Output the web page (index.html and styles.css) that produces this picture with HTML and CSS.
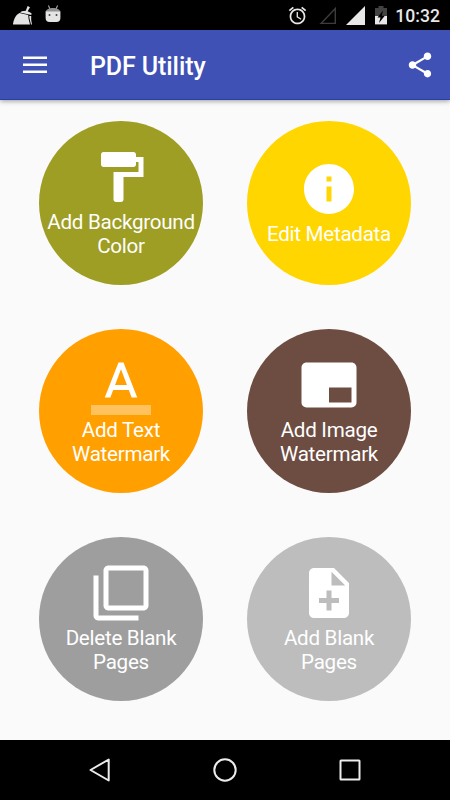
FILE: index.html
```html
<!DOCTYPE html>
<html lang="en">
<head>
    <meta charset="UTF-8">
    <meta name="viewport" content="width=device-width, initial-scale=1.0">
    <title>PDF Utility</title>
    <link rel="stylesheet" href="styles.css">
</head>
<body>
    <div class="status-bar">
        <div class="notifications">
            <svg width="20" height="20" viewBox="0 0 20 20" fill="#e4e4e4">
                <path d="M14.600 1L17 2.300L14.700 6.200L18.500 8.200L18.300 10L7 7.600L8.800 6.200L12.800 5.800z"/>
                <path d="M6.500 8L15.200 10L15.600 14L17 19.500H0C.4 15.500 2.200 10 6.500 8z"/>
                <path d="M16.200 11h2v4l.8 4.500h-1L16.600 14z"/>
            </svg>
            <svg width="16" height="18" viewBox="0 0 16 18">
                <path d="M3.400 .6L5 4M12.600 .6L11 4" stroke="#aaa" stroke-width="1.100"/>
                <path d="M.6 7C1.500 1.800 14.500 1.800 15.400 7z" fill="#929292"/>
                <path d="M.6 6.400h14.800V13q0 4-4 4H4.600q-4 0-4-4z" fill="#e4e4e4"/>
                <circle cx="4.500" cy="10" r="1" fill="#444"/>
                <circle cx="11.500" cy="10" r="1" fill="#444"/>
            </svg>
        </div>
        <div class="system">
            <svg class="alarm" width="21" height="21" viewBox="0 0 24 24" fill="#e8e8e8">
                <path d="M22 5.720l-4.600-3.860-1.290 1.530 4.600 3.860L22 5.720zM7.880 3.390L6.600 1.860 2 5.710l1.290 1.530 4.590-3.850zM12.500 8H11v6l4.750 2.850.750-1.230-4-2.370V8zM12 4c-4.970 0-9 4.030-9 9s4.020 9 9 9c4.970 0 9-4.030 9-9s-4.030-9-9-9zm0 16c-3.870 0-7-3.130-7-7s3.130-7 7-7 7 3.130 7 7-3.130 7-7 7z"/>
            </svg>
            <svg class="signal-off" width="18" height="19" viewBox="0 0 18 19">
                <path d="M2 17.400L16.300 2.500V17.400z" fill="none" stroke="#3c3c3c" stroke-width="1.400"/>
            </svg>
            <svg class="signal" width="19" height="19" viewBox="0 0 19 19">
                <path d="M0 19L19 0V19z" fill="#e8e8e8"/>
            </svg>
            <svg class="battery" width="12" height="19" viewBox="0 0 12 19">
                <path d="M3.500 0h5v2H12v8H0V2h3.500z" fill="#424242"/>
                <path d="M0 10h12v8.400H0z" fill="#e8e8e8"/>
                <path d="M8 4.500L2.500 11.500H5.500L4 17L9.800 9.800H6.800z" fill="#000"/>
            </svg>
            <span class="clock">10:32</span>
        </div>
    </div>

    <div class="toolbar">
        <svg class="menu-icon" width="24" height="18" viewBox="0 0 24 18" fill="#fff">
            <path d="M0 .500h24v2.500H0zM0 7.500h24v2.500H0zM0 14.500h24v2.500H0z"/>
        </svg>
        <h1>PDF Utility</h1>
        <svg class="share-icon" width="30" height="30" viewBox="0 0 24 24" fill="#fff">
            <path d="M18 16.080c-.760 0-1.440.300-1.960.770L8.910 12.700c.050-.230.090-.460.090-.700s-.040-.470-.090-.700l7.050-4.110c.540.500 1.250.810 2.040.810 1.660 0 3-1.340 3-3s-1.340-3-3-3-3 1.340-3 3c0 .240.040.470.090.700L8.040 9.810C7.500 9.310 6.790 9 6 9c-1.660 0-3 1.340-3 3s1.340 3 3 3c.790 0 1.500-.310 2.040-.810l7.120 4.160c-.050.210-.080.430-.080.650 0 1.610 1.310 2.920 2.920 2.920 1.610 0 2.920-1.310 2.920-2.920s-1.310-2.920-2.920-2.920z"/>
        </svg>
    </div>

    <div class="grid">
        <div class="tile olive">
            <svg class="icon" viewBox="0 0 24 24">
                <path d="M18 4V3c0-.550-.450-1-1-1H5c-.550 0-1 .450-1 1v4c0 .550.450 1 1 1h12c.550 0 1-.450 1-1V6h1v4H9v11c0 .550.450 1 1 1h2c.550 0 1-.450 1-1v-9h8V4h-3z"/>
            </svg>
            <span>Add Background<br>Color</span>
        </div>
        <div class="tile yellow">
            <svg class="icon" viewBox="0 0 24 24">
                <path d="M12 2C6.480 2 2 6.480 2 12s4.480 10 10 10 10-4.480 10-10S17.520 2 12 2zm1 15h-2v-6h2v6zm0-8h-2V7h2v2z"/>
            </svg>
            <span>Edit Metadata</span>
        </div>
        <div class="tile orange">
            <svg class="icon" viewBox="0 0 24 24">
                <path fill-opacity=".36" d="M0 20h24v4H0z"/>
                <path d="M11 3L5.500 17h2.250l1.120-3h6.250l1.120 3h2.250L13 3h-2zm-1.380 9L12 5.670 14.380 12H9.620z"/>
            </svg>
            <span>Add Text<br>Watermark</span>
        </div>
        <div class="tile brown">
            <svg class="icon" viewBox="0 0 24 24">
                <path d="M21 3H3c-1.100 0-2 .900-2 2v14c0 1.100.900 1.980 2 1.980h18c1.100 0 2-.880 2-1.980V5c0-1.100-.900-2-2-2zm0 16h-9v-6h9v6z"/>
            </svg>
            <span>Add Image<br>Watermark</span>
        </div>
        <div class="tile gray">
            <svg class="icon" viewBox="0 0 24 24">
                <path d="M3 5H1v16c0 1.100.900 2 2 2h16v-2H3V5zm18-4H7c-1.100 0-2 .900-2 2v14c0 1.100.900 2 2 2h14c1.100 0 2-.900 2-2V3c0-1.100-.900-2-2-2zm0 16H7V3h14v14z"/>
            </svg>
            <span>Delete Blank<br>Pages</span>
        </div>
        <div class="tile silver">
            <svg class="icon" viewBox="0 0 24 24">
                <path d="M14 2H6c-1.100 0-1.990.900-1.990 2L4 20c0 1.100.890 2 1.990 2H18c1.100 0 2-.900 2-2V8l-6-6zm2 14h-3v3h-2v-3H8v-2h3v-3h2v3h3v2zm-3-7V3.500L18.500 9H13z"/>
            </svg>
            <span>Add Blank<br>Pages</span>
        </div>
    </div>

    <div class="nav-bar">
        <svg width="26" height="26" viewBox="0 0 26 26">
            <path d="M3.500 13L21.700 2.500V23.500z"/>
        </svg>
        <svg width="26" height="26" viewBox="0 0 26 26">
            <circle cx="13" cy="13" r="10.700"/>
        </svg>
        <svg width="26" height="26" viewBox="0 0 26 26">
            <rect x="3.500" y="3.500" width="19" height="19" rx=".5"/>
        </svg>
    </div>
</body>
</html>
```

FILE: styles.css
```css
body {
    font-family: Roboto, sans-serif;
    background-color: #fafafa;
    margin: 0;
    height: 100vh;
    display: flex;
    flex-direction: column;
    overflow: hidden;
}
svg {
    display: block;
    flex-shrink: 0;
}
.status-bar {
    height: 30px;
    box-sizing: border-box;
    padding: 0 10px 0 13px;
    background-color: #000;
    display: flex;
    justify-content: space-between;
}
.notifications {
    display: flex;
    gap: 12px;
    padding-top: 5px;
}
.system {
    display: flex;
    align-items: center;
}
.signal-off {
    margin-left: 11px;
}
.signal {
    margin-left: 9px;
}
.battery {
    margin-left: 10px;
}
.clock {
    margin-left: 8px;
    color: #e8e8e8;
    font-size: 17.6px;
    font-weight: 500;
    line-height: 30px;
    padding-top: 2px;
}
.toolbar {
    height: 70px;
    box-sizing: border-box;
    padding: 0 15px 0 23px;
    background-color: #3f51b5;
    border-bottom: 1px solid #2a3f9f;
    box-shadow: 0 1px 5px rgba(0, 0, 0, 0.4);
    display: flex;
    align-items: center;
}
h1 {
    margin: 3px 0 0 43px;
    flex: 1;
    color: #fff;
    font-size: 25px;
    font-weight: 500;
    letter-spacing: -0.1px;
}
.grid {
    flex: 1;
    display: grid;
    grid-template-columns: 164px 164px;
    grid-auto-rows: 164px;
    gap: 44px;
    padding: 21px 0 0 39px;
}
.tile {
    border-radius: 50%;
    display: flex;
    flex-direction: column;
    align-items: center;
    justify-content: center;
    gap: 2.6px;
    color: #fff;
    font-size: 20.6px;
    letter-spacing: -0.27px;
    line-height: 24px;
    text-align: center;
    white-space: nowrap;
}
.icon {
    width: 60px;
    height: 60px;
    margin: -0.6px 1px 0 0;
    fill: #fff;
}
.olive {
    background-color: #9e9d24;
}
.yellow {
    background-color: #ffd600;
}
.orange {
    background-color: #ffa000;
}
.brown {
    background-color: #6d4c41;
}
.gray {
    background-color: #9e9e9e;
}
.silver {
    background-color: #bdbdbd;
}
.nav-bar {
    height: 60px;
    box-sizing: border-box;
    padding: 0 87px;
    background-color: #000;
    display: flex;
    align-items: center;
    justify-content: space-between;
    fill: none;
    stroke: #ececec;
    stroke-width: 2;
    stroke-linejoin: round;
}
```
